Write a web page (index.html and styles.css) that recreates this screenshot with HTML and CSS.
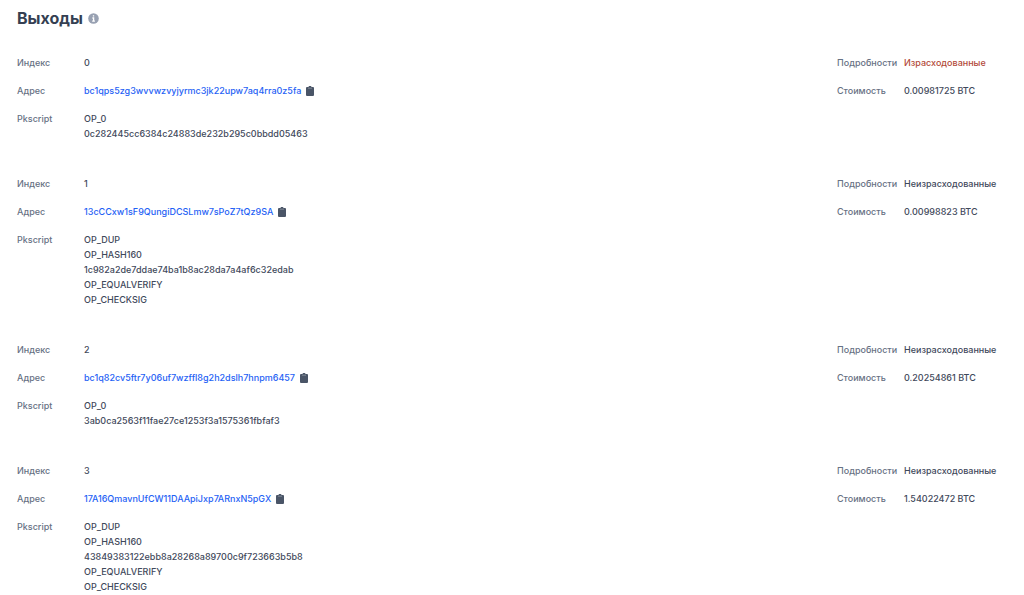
FILE: index.html
```
<!DOCTYPE html>
<html lang="ru">
<head>
<meta charset="utf-8">
<title>Выходы</title>
<link rel="stylesheet" href="styles.css">
</head>
<body>
<svg class="defs" aria-hidden="true">
  <symbol id="clipboard" viewBox="0 0 8 10">
    <path d="M1 1h1.6a1.4 1.4 0 0 1 2.8 0H7a1 1 0 0 1 1 1v7a1 1 0 0 1-1 1H1a1 1 0 0 1-1-1V2a1 1 0 0 1 1-1z" fill="#4a5567"/>
    <path d="M2 2.2h4" stroke="#8d96a3" stroke-width=".8"/>
  </symbol>
</svg>
<main class="outputs">
  <header class="heading">
    <h1 class="title">Выходы</h1>
    <svg class="info" viewBox="0 0 11 11" role="img" aria-label="Информация">
      <circle cx="5.5" cy="5.5" r="5.3" fill="#98a1b2"/>
      <path d="M5.5 2.2v1.4M4.4 5h1.2v3M4.2 8.2h2.7" fill="none" stroke="#fff" stroke-width="1.3"/>
    </svg>
  </header>

  <section class="output">
    <dl class="fields">
      <dt>Индекс</dt><dd>0</dd>
      <dt>Адрес</dt><dd class="address"><a href="#">bc1qps5zg3wvvwzvyjyrmc3jk22upw7aq4rra0z5fa</a><button class="copy" type="button" aria-label="Копировать"><svg><use href="#clipboard"/></svg></button></dd>
      <dt>Pkscript</dt><dd>OP_0<br>0c282445cc6384c24883de232b295c0bbdd05463</dd>
    </dl>
    <dl class="fields summary">
      <dt>Подробности</dt><dd class="spent">Израсходованные</dd>
      <dt>Стоимость</dt><dd>0.00981725 BTC</dd>
    </dl>
  </section>

  <section class="output">
    <dl class="fields">
      <dt>Индекс</dt><dd>1</dd>
      <dt>Адрес</dt><dd class="address"><a href="#">13cCCxw1sF9QungiDCSLmw7sPoZ7tQz9SA</a><button class="copy" type="button" aria-label="Копировать"><svg><use href="#clipboard"/></svg></button></dd>
      <dt>Pkscript</dt><dd>OP_DUP<br>OP_HASH160<br>1c982a2de7ddae74ba1b8ac28da7a4af6c32edab<br>OP_EQUALVERIFY<br>OP_CHECKSIG</dd>
    </dl>
    <dl class="fields summary">
      <dt>Подробности</dt><dd>Неизрасходованные</dd>
      <dt>Стоимость</dt><dd>0.00998823 BTC</dd>
    </dl>
  </section>

  <section class="output">
    <dl class="fields">
      <dt>Индекс</dt><dd>2</dd>
      <dt>Адрес</dt><dd class="address"><a href="#">bc1q82cv5ftr7y06uf7wzffl8g2h2dslh7hnpm6457</a><button class="copy" type="button" aria-label="Копировать"><svg><use href="#clipboard"/></svg></button></dd>
      <dt>Pkscript</dt><dd>OP_0<br>3ab0ca2563f11fae27ce1253f3a1575361fbfaf3</dd>
    </dl>
    <dl class="fields summary">
      <dt>Подробности</dt><dd>Неизрасходованные</dd>
      <dt>Стоимость</dt><dd>0.20254861 BTC</dd>
    </dl>
  </section>

  <section class="output">
    <dl class="fields">
      <dt>Индекс</dt><dd>3</dd>
      <dt>Адрес</dt><dd class="address"><a href="#">17A16QmavnUfCW11DAApiJxp7ARnxN5pGX</a><button class="copy" type="button" aria-label="Копировать"><svg><use href="#clipboard"/></svg></button></dd>
      <dt>Pkscript</dt><dd>OP_DUP<br>OP_HASH160<br>43849383122ebb8a28268a89700c9f723663b5b8<br>OP_EQUALVERIFY<br>OP_CHECKSIG</dd>
    </dl>
    <dl class="fields summary">
      <dt>Подробности</dt><dd>Неизрасходованные</dd>
      <dt>Стоимость</dt><dd>1.54022472 BTC</dd>
    </dl>
  </section>
</main>
</body>
</html>
```
FILE: styles.css
```
body {
  margin: 0;
  background: #fff;
  color: #3f495b;
  font: 500 9px/15px Inter, "Liberation Sans", sans-serif;
}

.defs {
  display: none;
}

.outputs {
  display: flex;
  flex-direction: column;
  gap: 35px;
  padding: 8px 17px 0;
}

.heading {
  display: flex;
  align-items: center;
  gap: 5px;
  margin-bottom: -8px;
}

.title {
  margin: 0;
  color: #353f52;
  font-size: 16px;
  font-weight: 700;
  line-height: 20px;
}

.info {
  width: 11px;
  height: 11px;
}

.output {
  display: flex;
  justify-content: space-between;
}

.fields {
  display: grid;
  grid-template-columns: 67px auto;
  gap: 13px 0;
  align-content: start;
  margin: 0;
}

.fields dt {
  color: #677184;
  white-space: nowrap;
}

.fields dd {
  margin: 0;
}

.fields .spent {
  color: #b24a3a;
}

.summary {
  grid-template-columns: 67px 103px;
}

.address {
  display: flex;
  align-items: center;
  gap: 5px;
}

.address a {
  color: #1f62f5;
  text-decoration: none;
}

.copy {
  display: flex;
  padding: 0;
  border: 0;
  background: none;
  cursor: pointer;
}

.copy svg {
  width: 8px;
  height: 10px;
}
```
